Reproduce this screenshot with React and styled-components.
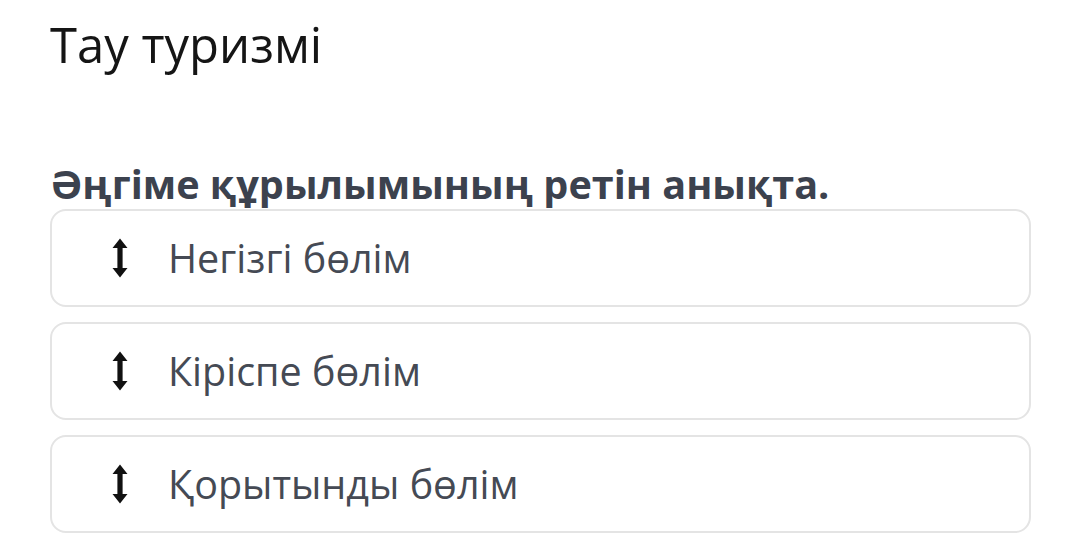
import React from 'react';
import styled, { createGlobalStyle } from 'styled-components';

const GlobalStyle = createGlobalStyle`
  body {
    margin: 0;
    background: #fff;
    font-family: "Open Sans", "Noto Sans", sans-serif;
  }
`;

const Page = styled.div`
  padding: 11px 38px 0 50px;
`;

const Title = styled.h1`
  margin: 0;
  font-size: 49px;
  font-weight: 400;
  line-height: 66px;
  color: #151515;
`;

const Question = styled.h2`
  margin: 85px 0 0;
  font-size: 39.6px;
  font-weight: 700;
  line-height: 44px;
  color: #3c424e;
`;

const List = styled.div`
  display: flex;
  flex-direction: column;
  gap: 15px;
  margin-top: 3px;
`;

const Item = styled.div`
  display: flex;
  align-items: center;
  height: 98px;
  box-sizing: border-box;
  border: 2px solid #e4e4e4;
  border-radius: 16px;
  padding-left: 58px;
`;

const Handle = styled.span`
  display: flex;
  width: 20px;
  margin-right: 38px;
`;

const Label = styled.span`
  font-size: 39.5px;
  color: #454a54;
`;

const UpDown = () => (
  <svg width="20" height="40" viewBox="0 0 20 40">
    <path d="M10 0.5 L17.5 10 L12.6 10 L12.6 30 L17.5 30 L10 39.5 L2.5 30 L7.4 30 L7.4 10 L2.5 10 Z" fill="#111" />
  </svg>
);

const items = ['Негізгі бөлім', 'Кіріспе бөлім', 'Қорытынды бөлім'];

export default function App() {
  return (
    <Page>
      <GlobalStyle />
      <Title>Тау туризмі</Title>
      <Question>Әңгіме құрылымының ретін анықта.</Question>
      <List>
        {items.map((text) => (
          <Item key={text}>
            <Handle><UpDown /></Handle>
            <Label>{text}</Label>
          </Item>
        ))}
      </List>
    </Page>
  );
}
